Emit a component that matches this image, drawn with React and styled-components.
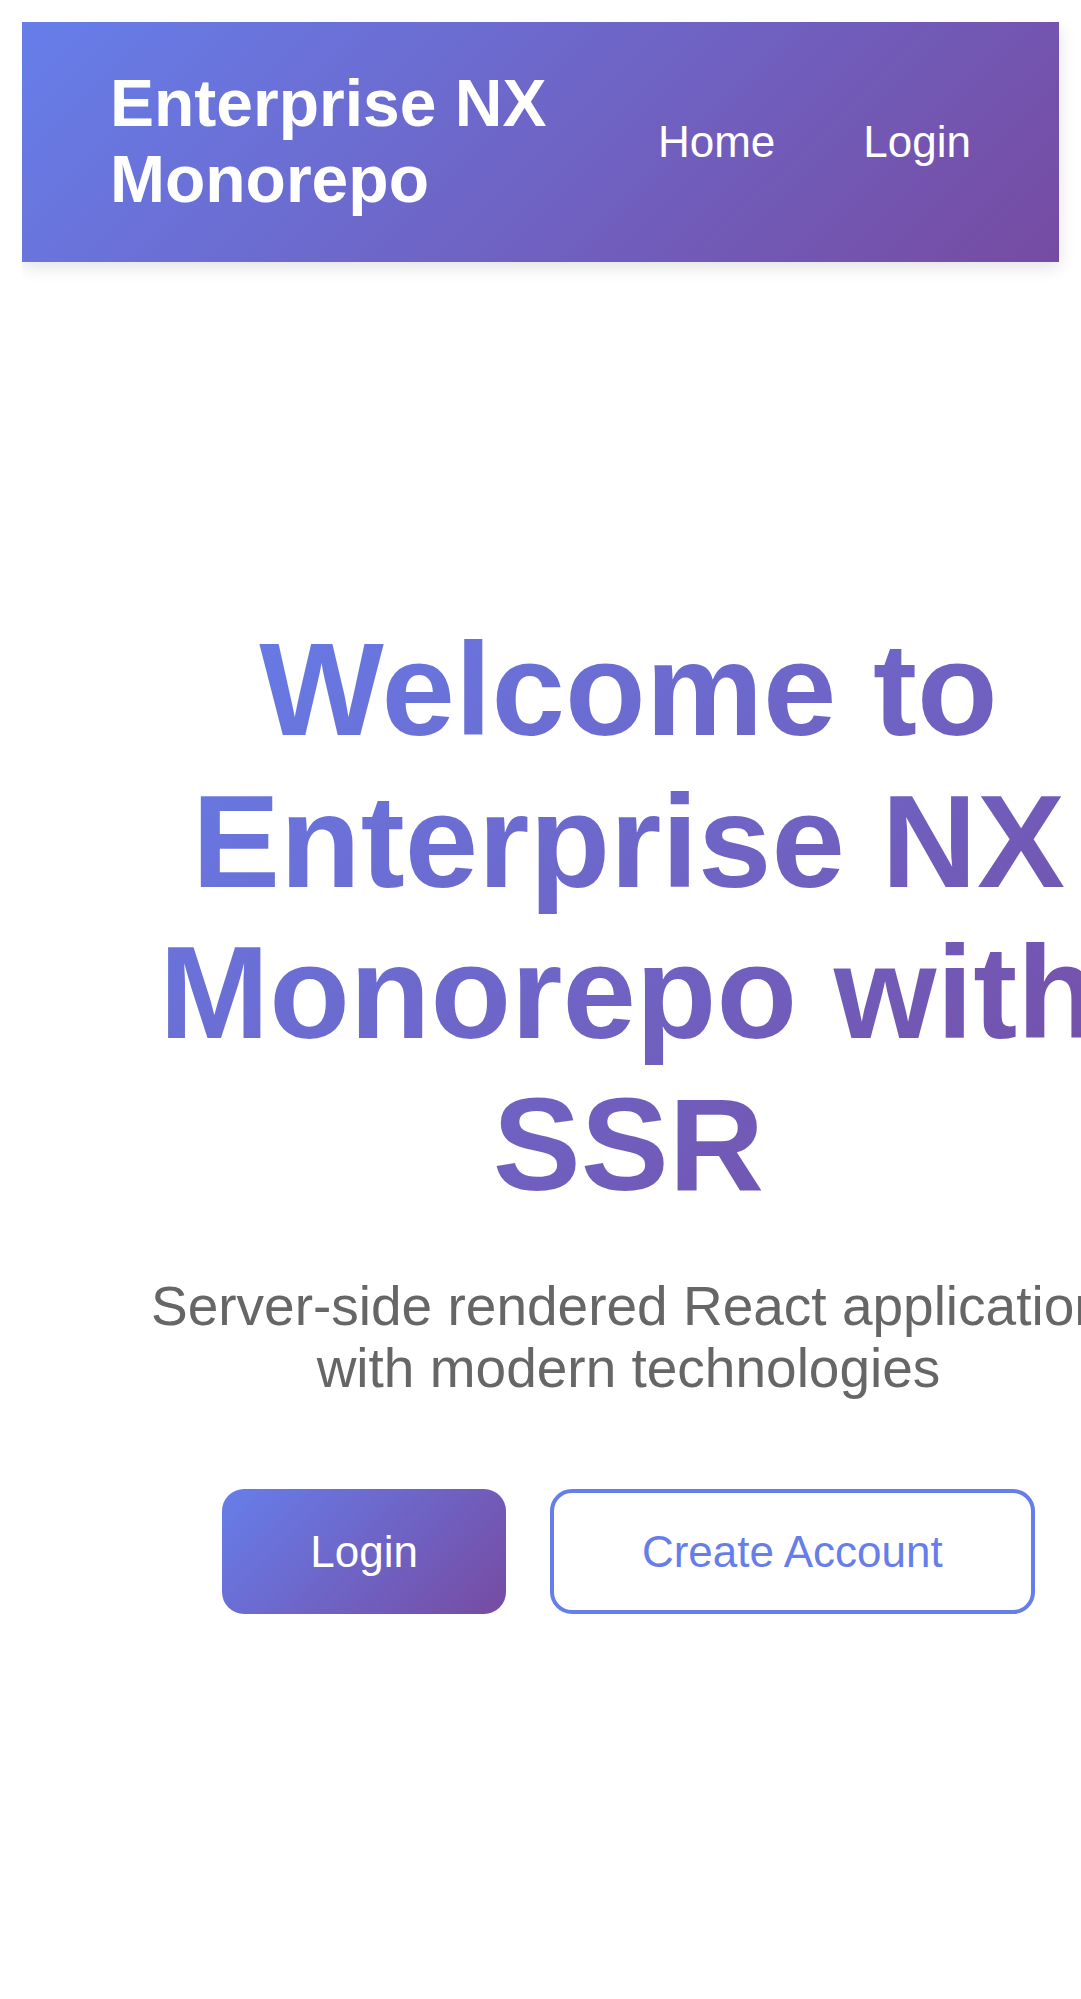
import React from "react";
import styled, { createGlobalStyle } from "styled-components";

const GlobalStyle = createGlobalStyle`
  body {
    margin: 22px 0 22px 22px;
    background: #ffffff;
    font-family: "Liberation Sans", Arial, Helvetica, sans-serif;
    color: #333333;
  }
  * {
    box-sizing: border-box;
  }
`;

const brandGradient = "linear-gradient(135deg, #667eea 0%, #764ba2 100%)";

const Header = styled.header`
  display: flex;
  justify-content: space-between;
  align-items: center;
  margin-right: 22px;
  padding: 44px 88px;
  background: ${brandGradient};
  box-shadow: 0 5px 16px rgba(0, 0, 0, 0.12);
`;

const Brand = styled.div`
  font-size: 66px;
  font-weight: 700;
  line-height: 1.15;
  color: #ffffff;
`;

const Nav = styled.nav`
  display: flex;
  align-items: center;
  gap: 88px;
  flex-shrink: 0;
`;

const NavLink = styled.a`
  font-size: 44px;
  line-height: 1.15;
  color: #ffffff;
  text-decoration: none;
  white-space: nowrap;
`;

const Hero = styled.section`
  width: 955px;
  margin-left: 129px;
  padding-top: 352px;
  text-align: center;
`;

const Title = styled.h1`
  margin: 0 0 54px;
  font-size: 132px;
  font-weight: 700;
  line-height: 1.15;
  background: ${brandGradient};
  -webkit-background-clip: text;
  background-clip: text;
  -webkit-text-fill-color: transparent;
  color: transparent;
`;

const Subtitle = styled.p`
  margin: 0 0 89px;
  font-size: 55px;
  line-height: 62.5px;
  color: #666666;
`;

const SubLine = styled.span`
  display: block;
  white-space: nowrap;
`;

const Actions = styled.div`
  display: flex;
  justify-content: center;
  gap: 44px;
`;

const ActionButton = styled.button`
  font-family: inherit;
  font-size: 44px;
  line-height: 51px;
  padding: ${(p) => (p.$outline ? "33px 88px" : "37px 88px")};
  border-radius: 22px;
  cursor: pointer;
  white-space: nowrap;
  border: ${(p) => (p.$outline ? "4px solid #667eea" : "none")};
  background: ${(p) => (p.$outline ? "#ffffff" : brandGradient)};
  color: ${(p) => (p.$outline ? "#667eea" : "#ffffff")};
`;

export default function App() {
  return (
    <>
      <GlobalStyle />
      <Header>
        <Brand>Enterprise NX Monorepo</Brand>
        <Nav>
          <NavLink href="#">Home</NavLink>
          <NavLink href="#">Login</NavLink>
        </Nav>
      </Header>
      <Hero>
        <Title>Welcome to Enterprise NX Monorepo with SSR</Title>
        <Subtitle>
          <SubLine>Server-side rendered React applications</SubLine>
          <SubLine>with modern technologies</SubLine>
        </Subtitle>
        <Actions>
          <ActionButton>Login</ActionButton>
          <ActionButton $outline>Create Account</ActionButton>
        </Actions>
      </Hero>
    </>
  );
}
